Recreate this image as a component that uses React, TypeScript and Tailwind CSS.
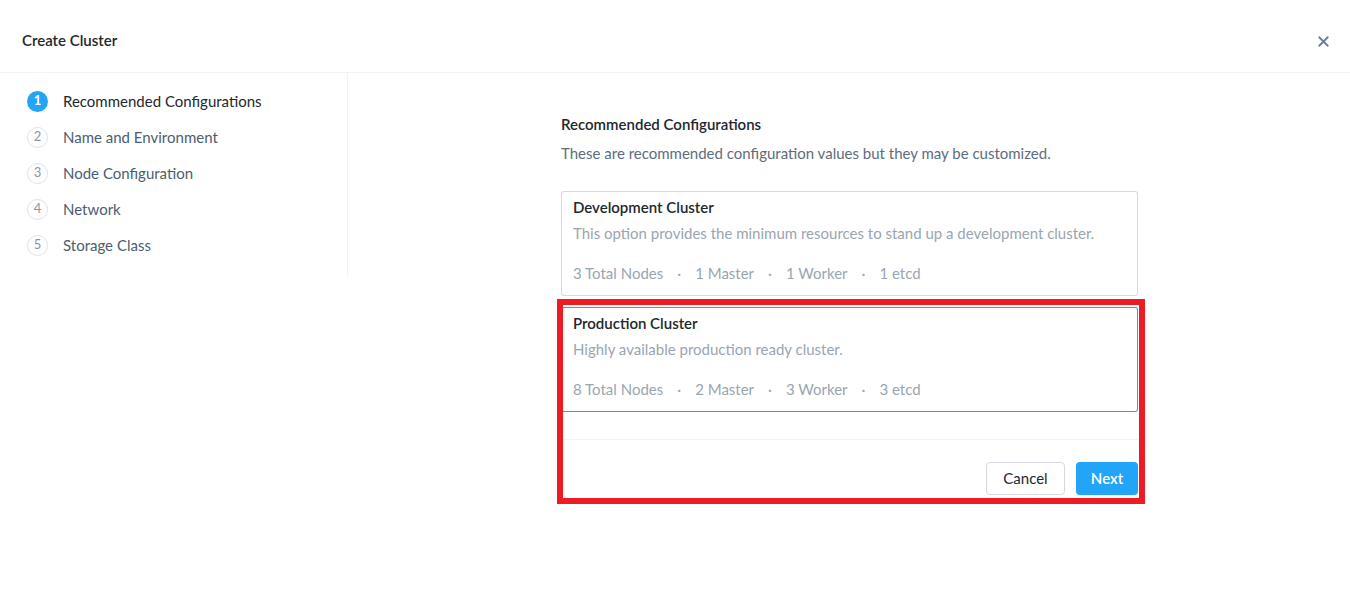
import { X } from "lucide-react"

const steps = [
  "Recommended Configurations",
  "Name and Environment",
  "Node Configuration",
  "Network",
  "Storage Class",
]

type ClusterCardProps = {
  title: string
  description: string
  stats: string[]
  borderClass: string
}

const ClusterCard = ({ title, description, stats, borderClass }: ClusterCardProps) => {
  return (
    <div className={`h-[105px] rounded-[3px] px-[12px] pt-[6px] ${borderClass}`}>
      <p className="text-[15px] font-semibold text-[#22272e] leading-[20px]">{title}</p>
      <p className="mt-[6px] text-[15px] text-[#9aa5b1] leading-[20px]">{description}</p>
      <div className="mt-[20px] flex items-center text-[15px] text-[#9aa5b1] leading-[20px]">
        {stats.map((stat, index) => (
          <span key={stat} className="flex items-center">
            {index > 0 && <span className="px-[14px]">·</span>}
            {stat}
          </span>
        ))}
      </div>
    </div>
  )
}

const App = () => {
  return (
    <div className="relative h-[612px] w-[1350px] bg-white font-['Lato',sans-serif]">
      <div className="flex h-[73px] items-start justify-between border-b border-[#f2f3f5] pl-[22px] pr-[18px]">
        <h1 className="mt-[30px] text-[15px] font-semibold text-[#22272e] leading-[20px]">Create Cluster</h1>
        <button className="mt-[33px] text-[#6b7d92]">
          <X className="h-[17px] w-[17px]" strokeWidth={2.5} />
        </button>
      </div>

      <div className="flex">
        <div className="h-[203px] w-[348px] border-r border-[#f2f3f5] pl-[27px] pt-[18px]">
          <ul className="flex flex-col gap-[16px]">
            {steps.map((step, index) => (
              <li key={step} className="flex h-[20px] items-center">
                {index === 0 ? (
                  <span className="flex h-[21px] w-[21px] items-center justify-center rounded-full bg-[#22a5f7] text-[13px] font-bold text-white">
                    1
                  </span>
                ) : (
                  <span className="flex h-[21px] w-[21px] items-center justify-center rounded-full border-[1.5px] border-[#dde1e6] text-[13px] text-[#8a96a3]">
                    {index + 1}
                  </span>
                )}
                <span
                  className={`ml-[15px] text-[15px] ${
                    index === 0 ? "text-[#22272e]" : "text-[#4b5d70]"
                  }`}
                >
                  {step}
                </span>
              </li>
            ))}
          </ul>
        </div>

        <div className="ml-[213px] w-[577px] pt-[41px]">
          <h2 className="text-[15px] font-semibold text-[#22272e] leading-[20px]">Recommended Configurations</h2>
          <p className="mt-[9px] text-[15px] text-[#5d6d7e] leading-[20px]">
            These are recommended configuration values but they may be customized.
          </p>

          <div className="mt-[28px] flex flex-col gap-[11px]">
            <ClusterCard
              title="Development Cluster"
              description="This option provides the minimum resources to stand up a development cluster."
              stats={["3 Total Nodes", "1 Master", "1 Worker", "1 etcd"]}
              borderClass="shadow-[inset_0_0_0_1px_#d5dae0]"
            />
            <ClusterCard
              title="Production Cluster"
              description="Highly available production ready cluster."
              stats={["8 Total Nodes", "2 Master", "3 Worker", "3 etcd"]}
              borderClass="shadow-[inset_0_0_0_1px_#22a5f7]"
            />
          </div>

          <div className="mt-[27px] border-t border-[#f2f3f5] pt-[22px]">
            <div className="flex justify-end gap-[11px]">
              <button className="h-[33px] w-[79px] rounded-[4px] border border-[#d5dae0] text-[15px] text-[#22272e]">
                Cancel
              </button>
              <button className="h-[33px] w-[62px] rounded-[4px] bg-[#22a5f7] text-[15px] font-semibold text-white">
                Next
              </button>
            </div>
          </div>
        </div>
      </div>

      {/* highlight overlay */}
      <div className="pointer-events-none absolute left-[557px] top-[299px] h-[205px] w-[588px] border-[6px] border-[#ed1c24]" />
    </div>
  )
}

export default App
